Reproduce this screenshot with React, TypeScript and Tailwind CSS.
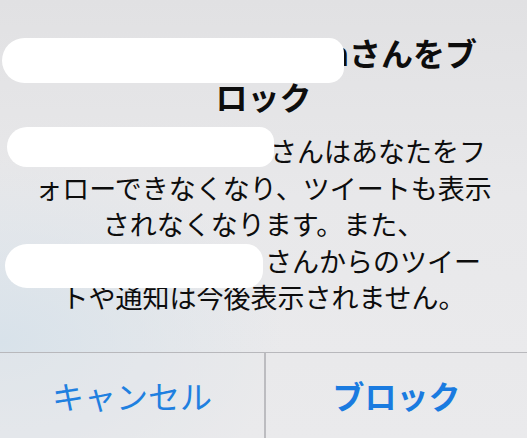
import React from "react";

// hidden username, drawn as a white marker stroke
const Redaction = ({ className }: { className: string }) => {
  return (
    <span
      className={`relative z-10 inline-block shrink-0 bg-white rounded-[999px] ${className}`}
    />
  );
};

const BlockAlert = () => {
  return (
    <div
      className="w-[527px] h-[438px] overflow-hidden flex flex-col text-[#0d0d0d] bg-[radial-gradient(ellipse_at_0%_78%,#d8e2ea_0%,rgba(222,230,238,0)_38%),linear-gradient(to_bottom,#e1e1e3,#e8e8ea_45%,#ebebed)]"
      style={{ fontFamily: '"Noto Sans CJK JP", "Noto Sans", sans-serif' }}
    >
      {/* Title */}
      <div className="pt-[30px] text-[32px] leading-[44px] font-bold">
        <div className="h-[44px] flex items-center justify-end pr-[50px]">
          <Redaction className="w-[342px] h-[45px] -mr-[16px] mt-[17px] rounded-l-[24px] rounded-r-[16px]" />
          <span className="whitespace-nowrap">nさんをブ</span>
        </div>
        <div className="text-center">ロック</div>
      </div>

      {/* Message */}
      <div className="mt-[15px] text-[27px] leading-[36.5px] text-center">
        <div className="h-[36.5px] flex items-center justify-end pr-[41px]">
          <Redaction className="w-[267px] h-[40px] -mr-[20px] -mt-[8px] rounded-l-[22px] rounded-r-[16px]" />
          <span className="whitespace-nowrap">nさんはあなたをフ</span>
        </div>
        <div className="whitespace-nowrap">ォローできなくなり、ツイートも表示</div>
        <div className="whitespace-nowrap">されなくなります。また、</div>
        <div className="h-[36.5px] flex items-center justify-end pr-[46px]">
          <Redaction className="w-[258px] h-[44px] mr-[2px] mt-[10px] rounded-l-[26px] rounded-r-[20px]" />
          <span className="whitespace-nowrap">さんからのツイー</span>
        </div>
        <div className="whitespace-nowrap">トや通知は今後表示されません。</div>
      </div>

      {/* Buttons */}
      <div className="mt-auto h-[86px] flex border-t-[1.5px] border-[#b8b8bc] bg-[#e9e9eb]/40">
        <button className="w-[264px] flex items-center justify-center text-[32px] text-[#1f80e0] pb-[2px]">
          キャンセル
        </button>
        <div className="w-[2px] bg-[#bcbcc0]" />
        <button className="flex-1 flex items-center justify-center text-[32px] font-bold text-[#1a7be0] pb-[2px]">
          ブロック
        </button>
      </div>
    </div>
  );
};

export default function App() {
  return <BlockAlert />;
}
